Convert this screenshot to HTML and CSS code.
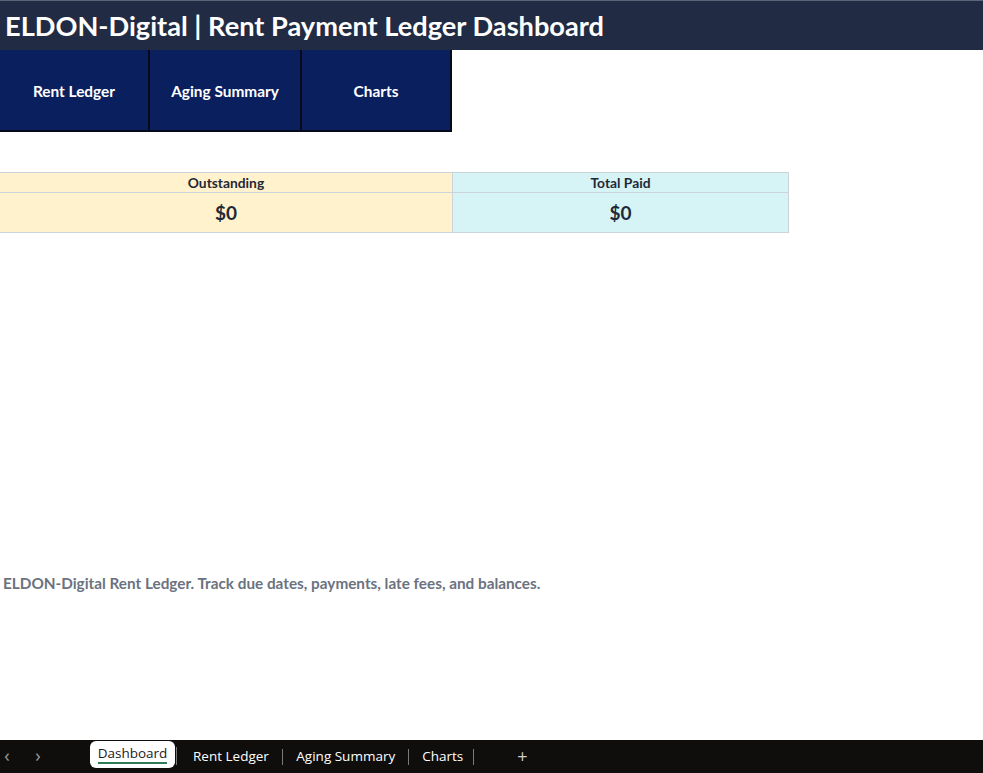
FILE: index.html
```html
<!DOCTYPE html>
<html>
<head>
<meta charset="utf-8">
<link rel="stylesheet" href="styles.css">
</head>
<body>
<div class="sheet">
  <header class="title-bar"><h1 class="title">ELDON-Digital | Rent Payment Ledger Dashboard</h1></header>
  <nav class="nav">
    <div class="nav-btn">Rent Ledger</div>
    <div class="nav-btn nav-mid">Aging Summary</div>
    <div class="nav-btn">Charts</div>
  </nav>
  <section class="cards">
    <div class="card card-out">
      <div class="card-head">Outstanding</div>
      <div class="card-val">$0</div>
    </div>
    <div class="card card-paid">
      <div class="card-head">Total Paid</div>
      <div class="card-val">$0</div>
    </div>
  </section>
  <p class="note">ELDON-Digital Rent Ledger. Track due dates, payments, late fees, and balances.</p>
</div>
<footer class="tabs">
  <span class="arrow">&lsaquo;</span>
  <span class="arrow arrow-r">&rsaquo;</span>
  <span class="tab active"><span class="tab-label">Dashboard</span></span>
  <span class="tab first">Rent Ledger</span>
  <span class="sep"></span>
  <span class="tab">Aging Summary</span>
  <span class="sep"></span>
  <span class="tab last">Charts</span>
  <span class="sep"></span>
  <span class="plus">+</span>
</footer>
</body>
</html>
```
FILE: styles.css
```css
html, body {
  margin: 0;
  padding: 0;
  background: #ffffff;
}
body {
  width: 983px;
  height: 773px;
  overflow: hidden;
  position: relative;
  font-family: Lato, "Liberation Sans", sans-serif;
}
.sheet {
  height: 740px;
  display: flex;
  flex-direction: column;
}
.title-bar {
  height: 49px;
  background: #212b44;
  border-top: 1px solid #5b6477;
  display: flex;
  align-items: center;
}
.title {
  margin: 0 0 0 5px;
  color: #ffffff;
  font-size: 27.2px;
  font-weight: 700;
}
.nav {
  display: flex;
  width: 452px;
  height: 80px;
  border-bottom: 2px solid #05091a;
}
.nav-btn {
  width: 150px;
  background: #0a1f5e;
  border-right: 2px solid #05091a;
  color: #ffffff;
  font-size: 15.4px;
  font-weight: 700;
  display: flex;
  align-items: center;
  justify-content: center;
  padding-top: 2px;
  box-sizing: border-box;
}
.nav-mid {
  width: 152px;
}
.cards {
  display: flex;
  margin-top: 40px;
}
.card {
  display: flex;
  flex-direction: column;
  border-bottom: 1px solid #cdd3da;
  border-top: 1px solid #cdd3da;
}
.card-out {
  width: 452px;
  background: #fff2cc;
}
.card-paid {
  width: 335px;
  background: #d6f4f6;
  border-left: 1px solid #cdd3da;
  border-right: 1px solid #cdd3da;
}
.card-head {
  height: 19px;
  border-bottom: 1px solid #cdd3da;
  color: #1f2937;
  font-size: 13.8px;
  font-weight: 700;
  display: flex;
  align-items: center;
  justify-content: center;
}
.card-val {
  height: 39px;
  color: #1f2937;
  font-size: 19px;
  font-weight: 700;
  display: flex;
  align-items: center;
  justify-content: center;
}
.note {
  margin: 341px 0 0 3px;
  color: #6b7280;
  font-size: 15.3px;
  font-weight: 700;
}
.tabs {
  position: absolute;
  left: 0;
  top: 740px;
  width: 983px;
  height: 33px;
  background: #100e0c;
  display: flex;
  align-items: center;
  font-family: "Open Sans", "Liberation Sans", sans-serif;
  font-size: 13.5px;
  color: #ffffff;
}
.arrow {
  color: #9b9b9b;
  font-size: 18px;
  width: 14px;
  margin-top: -3px;
  text-align: center;
}
.arrow-r {
  margin-left: 17px;
  margin-right: 45px;
}
.tab {
  padding: 0 13px 0 13.5px;
  white-space: nowrap;
  margin-top: -1px;
}
.tab.active {
  background: #ffffff;
  color: #1b1b1b;
  height: 27px;
  margin-top: -5px;
  border-radius: 6px;
  padding: 0 8px;
  display: flex;
  align-items: center;
  width: 69px;
  justify-content: center;
}
.tab-label {
  border-bottom: 2px solid #2f7a57;
  line-height: 16px;
  padding-bottom: 1px;
}
.sep {
  width: 1px;
  height: 16px;
  background: #7a7a7a;
}
.tab.first {
  border-left: 1px solid #7a7a7a;
  margin-left: 1px;
  padding-left: 16px;
}
.tab.last {
  padding-left: 13px;
  padding-right: 10px;
}
.plus {
  margin-left: 43px;
  font-size: 18px;
  color: #cfcfcf;
  margin-top: -2px;
}
```
